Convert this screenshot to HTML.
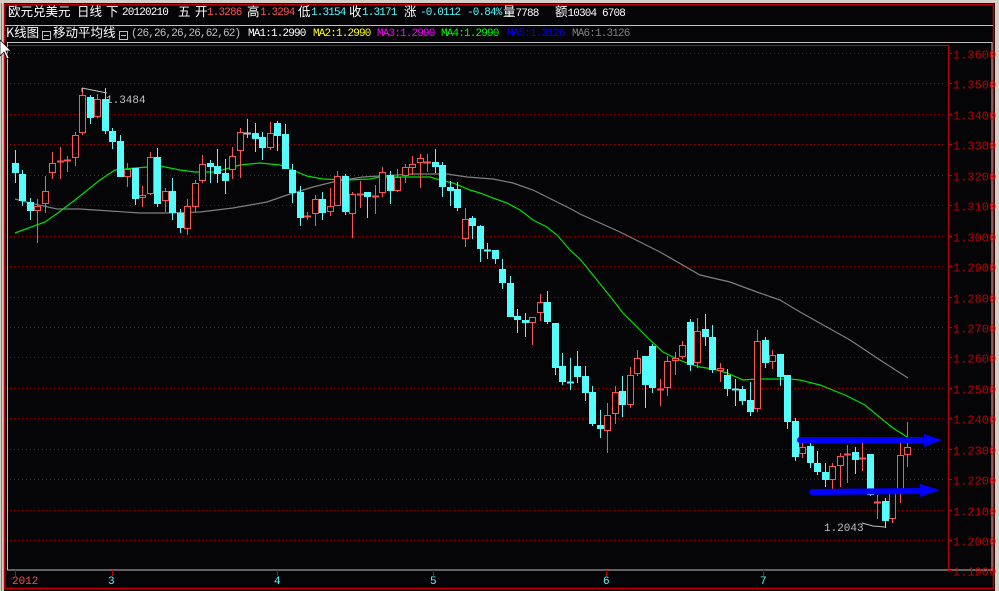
<!DOCTYPE html>
<html><head><meta charset="utf-8"><style>
html,body{margin:0;padding:0;background:#050508;width:999px;height:591px;overflow:hidden;position:relative}
.t{position:absolute;white-space:pre;font-family:"Liberation Mono","Noto Sans CJK SC",monospace;font-size:11px;line-height:14px;letter-spacing:-0.85px}
.c{font-family:"Noto Sans CJK SC","WenQuanYi Zen Hei",sans-serif;font-size:12.5px;letter-spacing:0}
.c span{letter-spacing:-0.85px}
</style></head><body>
<svg id="s" width="999" height="591" style="position:absolute;left:0;top:0" xmlns="http://www.w3.org/2000/svg">
<rect x="0" y="0" width="999" height="591" fill="#050508"/>
<rect x="0" y="0" width="4" height="591" fill="#d4d0c8"/>
<line x1="1.5" y1="0" x2="1.5" y2="591" stroke="#808080"/>
<rect x="0" y="0" width="999" height="3" fill="#d4d0c8"/>
<rect x="995" y="0" width="4" height="591" fill="#d4d0c8"/>
<rect x="4.5" y="4.5" width="989" height="584" fill="none" stroke="#c00000" stroke-width="1.5"/>
<line x1="5" y1="25.5" x2="993" y2="25.5" stroke="#c0c0c0"/>
<rect x="7.5" y="42.5" width="984.5" height="527.5" fill="none" stroke="#c0c0c0"/>
<line x1="948.5" y1="45" x2="948.5" y2="570" stroke="#c00000"/>
<line x1="8" y1="45.5" x2="949" y2="45.5" stroke="#c00000"/>
<g id="grid"></g>
<g id="ma"></g>
<g id="cd"></g>
<polyline points="82,88 107,93" fill="none" stroke="#c0c0c0"/>
<line x1="82" y1="88" x2="82" y2="92" stroke="#c0c0c0"/>
<text x="106" y="103" fill="#c0c0c0" font-family="Liberation Mono" font-size="11">1.3484</text>
<polyline points="862,523 873,526 885,527" fill="none" stroke="#c0c0c0"/>
<text x="824" y="531" fill="#c0c0c0" font-family="Liberation Mono" font-size="11">1.2043</text>
<line x1="800" y1="440" x2="928" y2="440" stroke="#0000ff" stroke-width="6" stroke-linecap="round"/>
<polygon points="924,434 942,440 924,447" fill="#0000ff"/>
<line x1="812" y1="492" x2="924" y2="491" stroke="#0000ff" stroke-width="6" stroke-linecap="round"/>
<polygon points="920,484 940,490 920,497" fill="#0000ff"/>
<g stroke="#c00000"><line x1="15.5" y1="570" x2="15.5" y2="576"/><line x1="112.5" y1="570" x2="112.5" y2="576"/><line x1="277.5" y1="570" x2="277.5" y2="576"/><line x1="433.5" y1="570" x2="433.5" y2="576"/><line x1="606.5" y1="570" x2="606.5" y2="576"/><line x1="763.5" y1="570" x2="763.5" y2="576"/></g>
<g font-family="Liberation Mono" font-size="11">
<text x="12" y="584" fill="#ff5050">2012</text>
<text x="108" y="584" fill="#54fcfc">3</text>
<text x="274" y="584" fill="#54fcfc">4</text>
<text x="430" y="584" fill="#54fcfc">5</text>
<text x="603" y="584" fill="#54fcfc">6</text>
<text x="760" y="584" fill="#54fcfc">7</text>
</g>
<g id="ax" font-family="Liberation Mono" font-size="12" fill="#c00000"></g>
<polygon points="0,40 0,56 4,52 7,59 9,58 6,51 11,51" fill="#fff" stroke="#000" stroke-width="0.7"/>
</svg>
<div class="t c" style="left:8px;top:4px;color:#fff">欧元兑美元</div>
<div class="t c" style="left:77px;top:4px;color:#fff">日线</div>
<div class="t c" style="left:106px;top:4px;color:#fff">下</div>
<div class="t" style="left:122px;top:6px;color:#fff">20120210</div>
<div class="t c" style="left:178px;top:4px;color:#fff">五</div>
<div class="t c" style="left:195px;top:4px;color:#fff">开</div>
<div class="t" style="left:207px;top:6px;color:#ff5050">1.3286</div>
<div class="t c" style="left:247px;top:4px;color:#fff">高</div>
<div class="t" style="left:260px;top:6px;color:#ff5050">1.3294</div>
<div class="t c" style="left:298px;top:4px;color:#fff">低</div>
<div class="t" style="left:311px;top:6px;color:#54fcfc">1.3154</div>
<div class="t c" style="left:349px;top:4px;color:#fff">收</div>
<div class="t" style="left:362px;top:6px;color:#54fcfc">1.3171</div>
<div class="t c" style="left:404px;top:4px;color:#fff">涨</div>
<div class="t" style="left:420px;top:6px;color:#54fcfc">-0.0112</div>
<div class="t" style="left:467px;top:6px;color:#54fcfc">-0.84%</div>
<div class="t c" style="left:503px;top:4px;color:#fff">量<span style="font-family:'Liberation Mono';font-size:11px">7788</span></div>
<div class="t c" style="left:555px;top:4px;color:#fff">额<span style="font-family:'Liberation Mono';font-size:11px">10304 6708</span></div>
<div class="t c" style="left:6px;top:25px;color:#fff">K线图</div>
<div style="position:absolute;left:42px;top:31px;width:7px;height:7px;border:1px solid #c0c0c0"><div style="margin:3px 1px 0;height:1px;background:#c0c0c0"></div></div>
<div class="t c" style="left:53px;top:25px;color:#fff">移动平均线</div>
<div style="position:absolute;left:119px;top:31px;width:7px;height:7px;border:1px solid #c0c0c0"><div style="margin:3px 1px 0;height:1px;background:#c0c0c0"></div></div>
<div class="t" style="left:131px;top:27px;color:#c0c0c0">(26,26,26,26,62,62)</div>
<div class="t" style="left:248px;top:27px;color:#fff">MA1:1.2990</div>
<div class="t" style="left:313px;top:27px;color:#ffff00">MA2:1.2990</div>
<div class="t" style="left:377px;top:27px;color:#ff00ff">MA3:1.2990</div>
<div class="t" style="left:441px;top:27px;color:#00ff00">MA4:1.2990</div>
<div class="t" style="left:507px;top:27px;color:#0000ff">MA5:1.3126</div>
<div class="t" style="left:572px;top:27px;color:#808080">MA6:1.3126</div>
<script>
var NS="http://www.w3.org/2000/svg";
function el(p,n,a){var e=document.createElementNS(NS,n);for(var k in a)e.setAttribute(k,a[k]);p.appendChild(e);return e;}
var g=document.getElementById('grid'),ax=document.getElementById('ax');
for(var i=0;i<=17;i++){var y=Math.round(53+i*30.44)+0.5;var p=(1.36-i*0.01).toFixed(4);
 if(i<17)el(g,'line',{x1:10,y1:y,x2:946,y2:y,stroke:'#a00000','stroke-dasharray':'1,3'});
 el(ax,'line',{x1:948,y1:y,x2:952,y2:y,stroke:'#c00000'});
 var t=el(ax,'text',{x:953,y:y+5});t.textContent=p;}
var ma=document.getElementById('ma');
el(ma,'polyline',{fill:'none',stroke:'#808080','stroke-width':1.2,points:"15,199 30,203 57,209 80,209 110,211 140,213 167,213 200,212 233,208 267,202 287,195 313,187 337,181 363,177 413,174 447,174 467,177 493,179 513,183 533,190 553,200 573,210 580,214 620,232 660,252 700,275 730,282 757,292 780,300 800,312 850,340 880,360 908,378"});
el(ma,'polyline',{fill:'none',stroke:'#00e000','stroke-width':1.2,points:"15,233 45,222 55,215 75,200 100,180 115,170 135,168 160,166 180,170 195,172 215,172 240,165 260,163 280,165 307,176 323,179 347,180 370,179 380,177 410,177 430,177 440,180 453,183 470,190 480,193 493,198 507,203 520,210 533,220 547,227 557,235 570,250 580,259 597,280 613,300 623,313 637,327 650,340 663,352 677,359 687,363 700,367 713,369 727,373 743,380 757,379 770,379 790,379 800,380 820,385 845,395 865,405 883,420 893,428 907,437"});
var D=[
[15,'c',163,173,150,183],[22,'c',174,201,170,206],[30,'c',202,211,198,220],[37,'r',206,211,199,243],[45,'r',191,204,176,213],[52,'r',163,173,152,179],[60,'r',161,161,147,179],[67,'r',160,160,156,172],[75,'r',135,158,132,166],[82,'r',95,133,88,135],[90,'c',97,118,95,124],[97,'r',99,117,94,118],[105,'c',99,131,88,134],[112,'c',131,142,128,149],[120,'c',141,177,135,177],[127,'r',169,177,163,187],[135,'c',168,199,168,205],[142,'r',195,198,186,207],[150,'r',157,194,152,195],[157,'c',157,204,148,207],[165,'r',191,201,188,212],[172,'c',191,213,178,220],[180,'c',213,228,209,233],[187,'r',206,229,199,235],[195,'r',183,207,180,212],[202,'r',164,181,155,183],[210,'c',163,167,160,183],[217,'c',166,174,149,183],[225,'c',173,181,159,194],[232,'r',156,170,147,179],[240,'r',132,151,128,178],[247,'w',133,133,119,138],[255,'c',133,139,123,152],[262,'c',137,148,132,160],[270,'r',133,148,122,150],[277,'c',123,136,121,151],[285,'c',134,169,124,169],[292,'c',170,193,164,203],[300,'c',192,218,186,226],[307,'r',216,216,212,220],[315,'r',199,214,195,226],[322,'c',199,213,192,220],[330,'r',206,212,188,216],[337,'r',176,206,171,206],[345,'c',176,212,174,215],[352,'r',194,214,192,238],[360,'r',194,194,181,208],[367,'c',192,197,192,218],[375,'r',196,196,185,214],[382,'r',172,193,167,197],[390,'c',175,191,171,204],[397,'r',177,191,169,192],[405,'r',167,176,164,183],[412,'r',164,168,156,175],[420,'r',158,163,154,188],[427,'r',162,162,154,172],[435,'c',162,167,149,173],[442,'c',165,187,162,197],[450,'c',187,191,181,206],[457,'c',189,208,182,211],[465,'r',219,239,208,247],[472,'c',218,226,216,239],[480,'c',226,249,225,262],[487,'c',250,250,243,259],[495,'c',250,259,250,264],[502,'c',269,283,259,289],[510,'c',283,317,276,317],[517,'c',316,320,309,333],[525,'c',320,323,313,337],[532,'r',317,323,317,345],[540,'r',302,313,294,321],[547,'c',302,322,291,324],[555,'c',323,368,323,375],[562,'c',366,382,353,385],[570,'c',382,382,358,390],[577,'c',366,377,351,383],[585,'c',376,393,366,401],[592,'c',392,424,386,426],[600,'c',425,429,410,438],[607,'r',415,431,403,453],[615,'r',392,414,386,424],[622,'c',391,405,376,417],[630,'r',375,405,367,408],[637,'r',358,374,350,376],[645,'c',356,385,356,408],[652,'c',346,388,344,393],[660,'r',389,389,379,406],[667,'r',361,388,356,396],[675,'r',358,361,352,375],[682,'r',345,357,341,359],[690,'c',322,365,319,371],[697,'r',331,363,318,368],[705,'c',329,337,314,346],[712,'c',337,370,325,373],[720,'r',368,371,363,382],[727,'c',375,389,369,396],[735,'c',389,389,379,406],[742,'c',389,401,386,405],[750,'c',400,412,382,416],[757,'r',341,409,330,412],[765,'c',340,363,337,368],[772,'r',355,362,350,369],[780,'c',354,377,354,386],[787,'c',375,422,375,429],[795,'c',421,457,418,461],[802,'r',447,454,443,458],[810,'c',446,463,438,468],[817,'c',463,472,451,475],[825,'c',472,480,463,487],[832,'r',466,480,463,490],[840,'r',456,466,453,487],[847,'r',454,454,445,483],[855,'c',452,460,447,474],[862,'r',458,458,443,471],[870,'c',454,495,454,496],[877,'r',502,502,495,519],[885,'c',501,521,498,528],[892,'r',493,519,493,523],[900,'r',455,493,443,503],[907,'r',447,455,422,467]];
var cd=document.getElementById('cd');
D.forEach(function(d){var x=d[0],col=d[1]=='c'?'#54fcfc':(d[1]=='w'?'#c0c0c0':'#ff5454');
 var xc=x+0.5;
 if(d[1]=='r'){el(cd,'line',{x1:xc,y1:d[4],x2:xc,y2:d[2],stroke:col});el(cd,'line',{x1:xc,y1:d[3],x2:xc,y2:d[5],stroke:col});}
 else el(cd,'line',{x1:xc,y1:d[4],x2:xc,y2:d[5],stroke:col});
 var h=d[3]-d[2];
 if(h<2){el(cd,'line',{x1:x-3,y1:d[2]+0.5,x2:x+4,y2:d[2]+0.5,stroke:col,'stroke-width':2});}
 else if(d[1]=='r'){el(cd,'rect',{x:x-2.5,y:d[2]+0.5,width:6,height:h-1,fill:'#050508',stroke:col});}
 else el(cd,'rect',{x:x-3,y:d[2],width:7,height:h,fill:col});
});
</script>
</body></html>
